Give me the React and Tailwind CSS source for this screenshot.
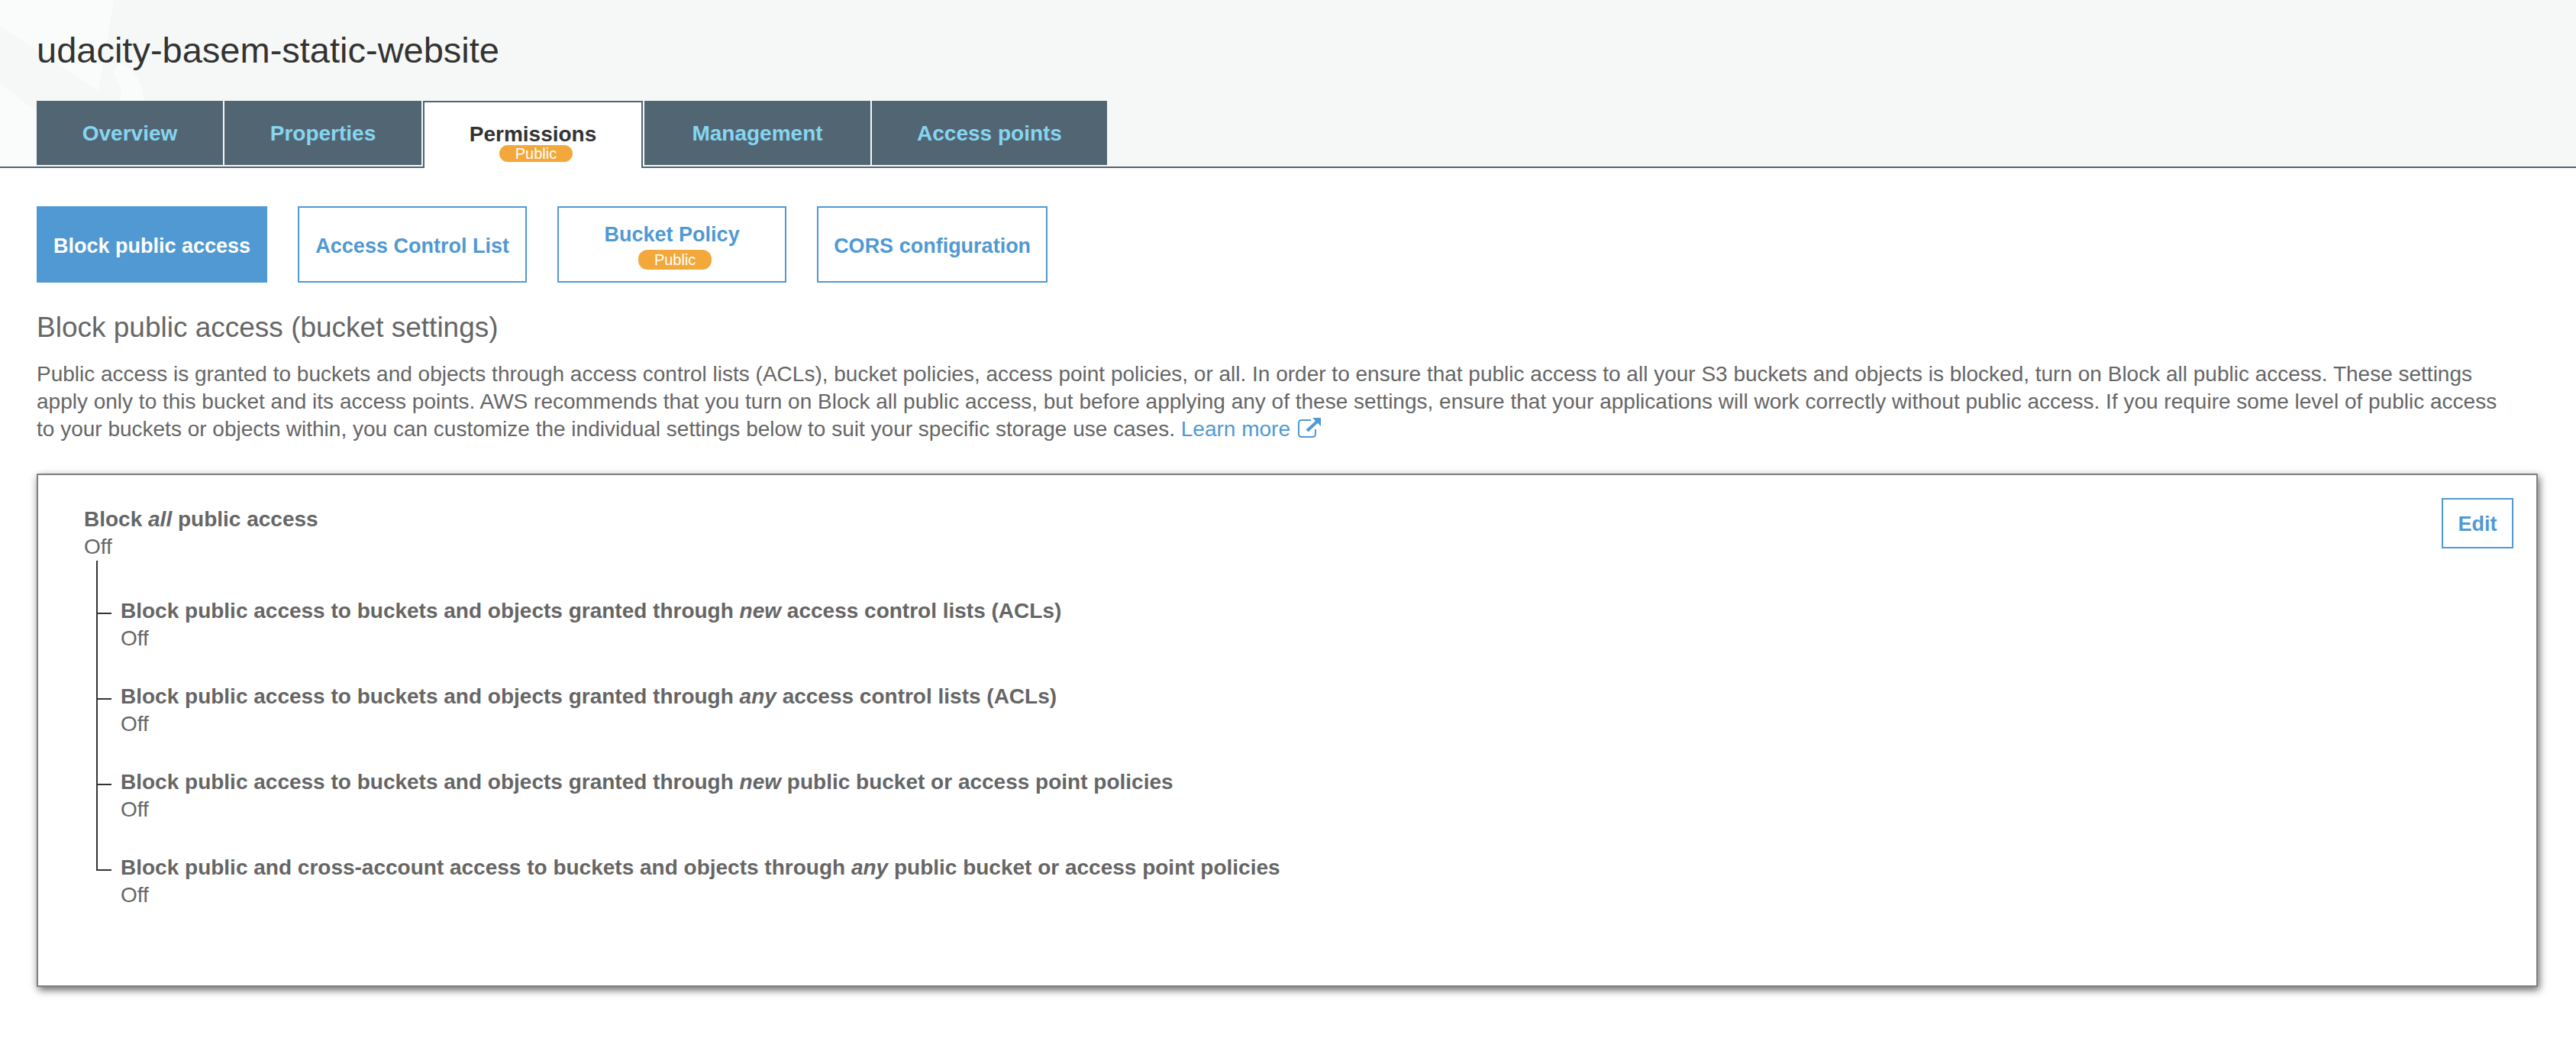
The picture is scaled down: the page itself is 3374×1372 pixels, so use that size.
const tabs = [
  { label: "Overview", width: "w-[244px]" },
  { label: "Properties", width: "w-[258px]" },
  { label: "Permissions", width: "w-[288px]", active: true, badge: "Public" },
  { label: "Management", width: "w-[296px]" },
  { label: "Access points", width: "w-[308px]" },
];

const sections = [
  { label: "Block public access", active: true },
  { label: "Access Control List" },
  { label: "Bucket Policy", badge: "Public" },
  { label: "CORS configuration" },
];

const settings = [
  ["Block public access to buckets and objects granted through ", "new", " access control lists (ACLs)"],
  ["Block public access to buckets and objects granted through ", "any", " access control lists (ACLs)"],
  ["Block public access to buckets and objects granted through ", "new", " public bucket or access point policies"],
  ["Block public and cross-account access to buckets and objects through ", "any", " public bucket or access point policies"],
];

function Watermark() {
  return (
    <svg className="absolute left-0 top-0" width="200" height="218" viewBox="0 0 200 218" fill="#fafcfb" aria-hidden="true">
      <path d="M0 0H149L129 119L0 34Z" />
      <path d="M0 109L48 146V218H0Z" />
      <path d="M149 99C148 91 152 85 160 84C178 90 188 112 188 132H157C162 120 158 110 149 99Z" />
    </svg>
  );
}

function Tab({ tab }) {
  if (tab.active) {
    return (
      <button
        type="button"
        role="tab"
        aria-selected="true"
        className={`${tab.width} flex h-[88px] flex-col items-center rounded-b-xs border-2 border-b-0 border-[#526572] bg-white pt-7 font-bold text-[#333]`}
      >
        <span className="leading-7">{tab.label}</span>
        <span className="ml-2 h-[22px] w-24 shrink-0 rounded-xl bg-[#f3a83b] text-xl leading-[22px] font-normal text-white">{tab.badge}</span>
      </button>
    );
  }
  return (
    <button
      type="button"
      role="tab"
      aria-selected="false"
      className={`${tab.width} h-[84px] bg-[#526572] pt-0.5 font-bold text-[#86d5f1]`}
    >
      {tab.label}
    </button>
  );
}

function SectionButton({ section }) {
  const tone = section.active ? "bg-[#5099d3] text-white" : "bg-white text-[#5099d3]";
  return (
    <button
      type="button"
      className={`${tone} flex h-[100px] min-w-[300px] flex-col items-center justify-center border-2 border-[#5099d3] px-5 pt-1 text-[27px] leading-8 font-bold`}
    >
      {section.label}
      {section.badge && (
        <span className="mt-1 ml-2 h-[26px] w-24 rounded-xl bg-[#f3a83b] text-xl leading-[26px] font-normal text-white">{section.badge}</span>
      )}
    </button>
  );
}

function ExternalIcon() {
  return (
    <svg className="ml-2.5 inline-block align-[-2px]" width="30" height="26" viewBox="0 0 30 26" fill="none" aria-hidden="true">
      <path d="M17 3H5Q1 3 1 7V21Q1 25 5 25H19Q23 25 23 21V15" stroke="#5099d3" strokeWidth="2" />
      <path d="M12 17L25 5" stroke="#5099d3" strokeWidth="4" />
      <path d="M19 0H30V11Z" fill="#5099d3" />
    </svg>
  );
}

export default function App() {
  return (
    <div className="min-h-screen bg-white font-['Liberation_Sans',Arial,sans-serif] text-[28px] leading-9 text-[#666]">
      <header className="relative border-b-2 border-[#526572] bg-[#f6f8f7]">
        <Watermark />
        <div className="relative px-12 pt-9">
          <h1 className="text-[47px] leading-[60px] text-[#333]">udacity-basem-static-website</h1>
          <div role="tablist" className="-mb-0.5 mt-9 flex h-[88px] items-start gap-0.5">
            {tabs.map((tab) => (
              <Tab key={tab.label} tab={tab} />
            ))}
          </div>
        </div>
      </header>

      <main className="pt-[50px] pr-[50px] pb-20 pl-12">
        <nav className="flex gap-10">
          {sections.map((section) => (
            <SectionButton key={section.label} section={section} />
          ))}
        </nav>

        <h2 className="mt-[34px] text-[37px] leading-[50px]">Block public access (bucket settings)</h2>
        <p className="mt-[18px] pr-6">
          Public access is granted to buckets and objects through access control lists (ACLs), bucket policies, access
          point policies, or all. In order to ensure that public access to all your S3 buckets and objects is blocked,
          turn on Block all public access. These settings apply only to this bucket and its access points. AWS
          recommends that you turn on Block all public access, but before applying any of these settings, ensure that
          your applications will work correctly without public access. If you require some level of public access to
          your buckets or objects within, you can customize the individual settings below to suit your specific storage
          use cases.{" "}
          <a href="#learn-more" className="text-[#5099d3]">
            Learn more
            <ExternalIcon />
          </a>
        </p>

        <section className="mt-10 flex items-start justify-between border-2 border-[#808080] pt-[30px] pr-[30px] pb-[100px] pl-[60px] shadow-[2px_4px_10px_rgba(0,0,0,0.6)]">
          <div className="pt-2.5">
            <h3 className="font-bold">
              Block <em>all</em> public access
            </h3>
            <p>Off</p>
            <ul className="pl-4">
              {settings.map(([before, word, after], index) => (
                <li key={index} className="flex">
                  <div aria-hidden="true" className="w-5 shrink-0">
                    <div className={`${index === 0 ? "h-[70px]" : "h-28"} border-b-2 border-l-2 border-[#333]`} />
                  </div>
                  <div className={`${index === 0 ? "pt-12" : "pt-[90px]"} ${index === settings.length - 1 ? "" : "-mb-[50px]"} pl-3`}>
                    <h4 className="font-bold">
                      {before}
                      <em>{word}</em>
                      {after}
                    </h4>
                    <p>Off</p>
                  </div>
                </li>
              ))}
            </ul>
          </div>
          <button type="button" className="h-[66px] w-[94px] border-2 border-[#5099d3] pt-0.5 text-[27px] font-bold text-[#5099d3]">
            Edit
          </button>
        </section>
      </main>
    </div>
  );
}
